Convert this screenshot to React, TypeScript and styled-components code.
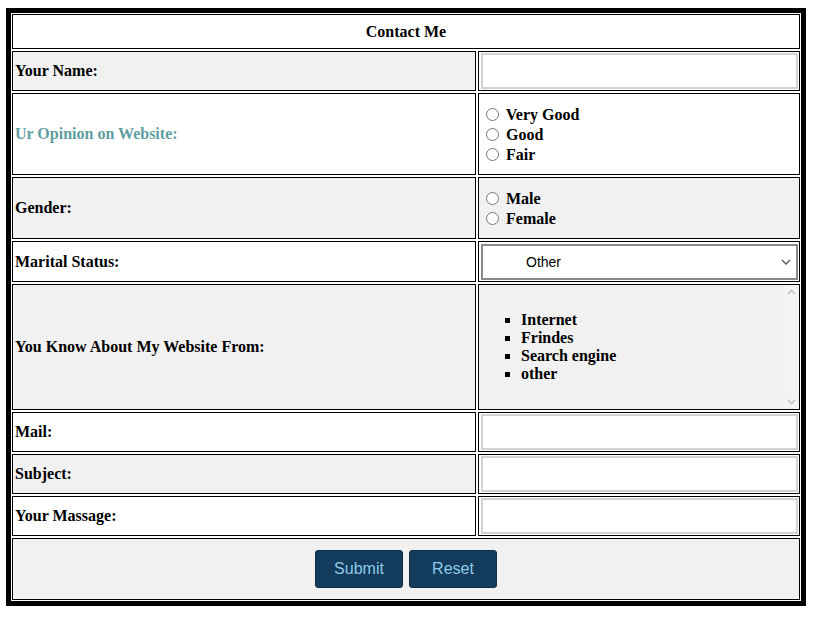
import React from "react";
import styled, { createGlobalStyle } from "styled-components";

const selectChevron =
  "data:image/svg+xml," +
  encodeURIComponent(
    "<svg xmlns='http://www.w3.org/2000/svg' width='10' height='6' viewBox='0 0 10 6'><path d='M1 1 L5 5 L9 1' fill='none' stroke='#5a5a5a' stroke-width='1.4'/></svg>"
  );

const Global = createGlobalStyle`
  html, body { background: #ffffff; }
  body {
    margin: 8px 0 0 6px;
    font-family: "Liberation Serif", "Times New Roman", serif;
    color: #000;
  }
  * { box-sizing: border-box; }
`;

const Form = styled.form`
  width: 800px;
  border: 5px solid #000;
  padding: 1px;
  display: grid;
  grid-template-columns: 464px 322px;
  gap: 2px;
  background: #fff;
`;

const Cell = styled.div<{ $h: number; $gray?: boolean; $span?: boolean; $center?: boolean }>`
  height: ${(p) => p.$h}px;
  border: 1px solid #000;
  background: ${(p) => (p.$gray ? "#f1f1f1" : "#ffffff")};
  grid-column: ${(p) => (p.$span ? "1 / span 2" : "auto")};
  display: flex;
  align-items: center;
  justify-content: ${(p) => (p.$center ? "center" : "flex-start")};
  padding: 0 2px;
  font-weight: bold;
  font-size: 16px;
`;

const Label = styled.span<{ $accent?: boolean }>`
  color: ${(p) => (p.$accent ? "cadetblue" : "#000")};
`;

const FieldCell = styled(Cell)`
  padding: 0 1px 0 2px;
`;

const ListCell = styled(Cell)`
  padding: 0 0 0 2px;
  align-items: stretch;
`;

const TextInput = styled.input`
  width: 100%;
  height: 36px;
  border: 2px solid #d3d3d3;
  background: #fff;
  outline: none;
  font-size: 14px;
`;

const Options = styled.div`
  display: flex;
  flex-direction: column;
  padding-top: 1px;
`;

const Option = styled.label`
  display: block;
  height: 20px;
  line-height: 20px;
  font-weight: bold;
  font-size: 16px;
  white-space: nowrap;
`;

const Radio = styled.input`
  width: 13px;
  height: 13px;
  margin: 3px 3px 0 5px;
  vertical-align: -1px;
`;

const Select = styled.select`
  width: 100%;
  height: 36px;
  border: 2px solid #8a8a8a;
  border-radius: 0;
  appearance: none;
  -webkit-appearance: none;
  background: #fff url("${selectChevron}") right 5px center no-repeat;
  padding: 0 20px 0 43px;
  font-family: "Liberation Sans", Arial, sans-serif;
  font-size: 14px;
  color: #000;
`;

const ScrollBox = styled.div`
  flex: 1;
  overflow-y: auto;
  display: flex;
  align-items: center;
`;

const Rail = styled.div`
  width: 15px;
  flex: none;
  background: #f3f3f3;
  display: flex;
  flex-direction: column;
  justify-content: space-between;
  align-items: center;
  padding: 4px 0 4px;
`;

const List = styled.ul`
  margin: 0;
  padding-left: 40px;
  list-style: square;
  line-height: 18px;
  font-weight: bold;
  font-size: 16px;
`;

const Buttons = styled.div`
  display: flex;
  gap: 6px;
`;

const Button = styled.button`
  width: 88px;
  height: 38px;
  background: #133b5c;
  color: #8ecae6;
  border: 1px solid #0e2f4a;
  border-radius: 3px;
  font-family: "Liberation Sans", Arial, sans-serif;
  font-size: 16px;
  cursor: pointer;
`;

const Chevron = ({ up }: { up?: boolean }) => (
  <svg width="9" height="6" viewBox="0 0 9 6" aria-hidden="true">
    <path
      d={up ? "M1 5 L4.5 1.5 L8 5" : "M1 1 L4.5 4.5 L8 1"}
      fill="none"
      stroke="#c4c4c4"
      strokeWidth="1.6"
    />
  </svg>
);

export default function App() {
  return (
    <>
      <Global />
      <Form onSubmit={(e) => e.preventDefault()}>
        <Cell $h={35} $span $center>
          Contact Me
        </Cell>

        <Cell $h={40} $gray>
          <Label>Your Name:</Label>
        </Cell>
        <FieldCell $h={40}>
          <TextInput type="text" />
        </FieldCell>

        <Cell $h={82}>
          <Label $accent>Ur Opinion on Website:</Label>
        </Cell>
        <Cell $h={82}>
          <Options>
            <Option>
              <Radio type="radio" name="opinion" /> Very Good
            </Option>
            <Option>
              <Radio type="radio" name="opinion" /> Good
            </Option>
            <Option>
              <Radio type="radio" name="opinion" /> Fair
            </Option>
          </Options>
        </Cell>

        <Cell $h={62} $gray>
          <Label>Gender:</Label>
        </Cell>
        <Cell $h={62} $gray>
          <Options>
            <Option>
              <Radio type="radio" name="gender" /> Male
            </Option>
            <Option>
              <Radio type="radio" name="gender" /> Female
            </Option>
          </Options>
        </Cell>

        <Cell $h={41}>
          <Label>Marital Status:</Label>
        </Cell>
        <FieldCell $h={41}>
          <Select defaultValue="other">
            <option value="single">Single</option>
            <option value="married">Married</option>
            <option value="other">Other</option>
          </Select>
        </FieldCell>

        <Cell $h={126} $gray>
          <Label>You Know About My Website From:</Label>
        </Cell>
        <ListCell $h={126} $gray>
          <ScrollBox>
            <List>
              <li>Internet</li>
              <li>Frindes</li>
              <li>Search engine</li>
              <li>other</li>
            </List>
          </ScrollBox>
          <Rail>
            <Chevron up />
            <Chevron />
          </Rail>
        </ListCell>

        <Cell $h={40}>
          <Label>Mail:</Label>
        </Cell>
        <FieldCell $h={40}>
          <TextInput type="email" />
        </FieldCell>

        <Cell $h={40} $gray>
          <Label>Subject:</Label>
        </Cell>
        <FieldCell $h={40}>
          <TextInput type="text" />
        </FieldCell>

        <Cell $h={40}>
          <Label>Your Massage:</Label>
        </Cell>
        <FieldCell $h={40}>
          <TextInput type="text" />
        </FieldCell>

        <Cell $h={62} $gray $span $center>
          <Buttons>
            <Button type="submit">Submit</Button>
            <Button type="reset">Reset</Button>
          </Buttons>
        </Cell>
      </Form>
    </>
  );
}
